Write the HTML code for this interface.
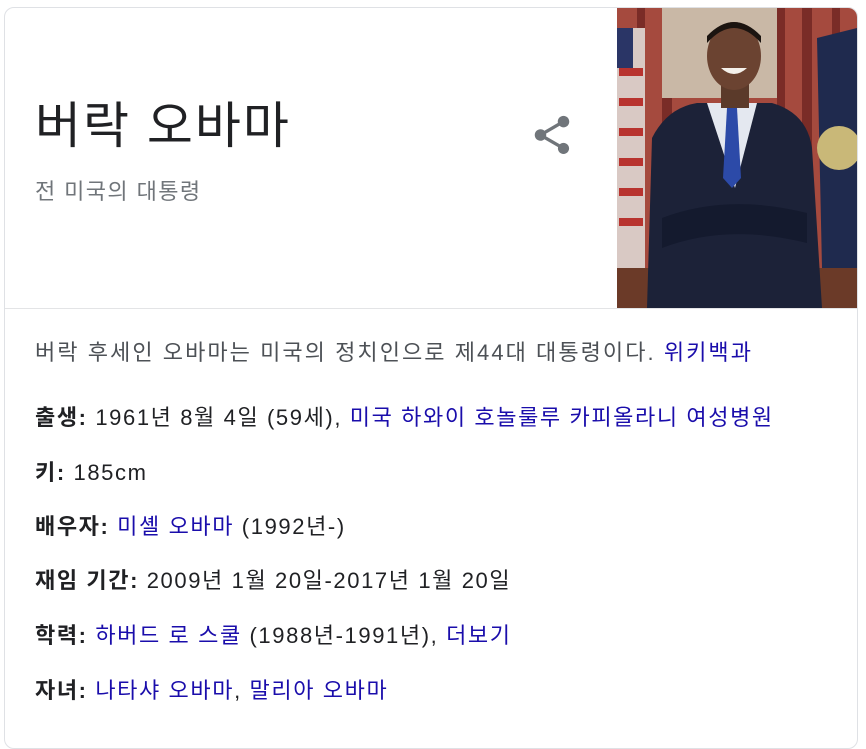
<!DOCTYPE html>
<html><head><meta charset="utf-8"><style>
html,body{margin:0;padding:0;background:#fff;width:866px;height:732px;overflow:hidden}
body{font-family:"Liberation Sans","Noto Sans CJK KR",sans-serif;color:#202124}
.card{position:absolute;left:4px;top:7px;width:852px;height:740px;border:1px solid #dfe1e5;border-radius:10px;overflow:hidden;background:#fff}
.photo{position:absolute;left:612px;top:0;width:240px;height:300px}
.div{position:absolute;left:0;top:300px;width:852px;height:1px;background:#e3e4e6}
h1{position:absolute;left:30px;top:88px;margin:0;font-size:50px;letter-spacing:2px;font-weight:400;line-height:60px;color:#202124}
.sub{position:absolute;left:30px;top:166px;font-size:22px;letter-spacing:1.4px;color:#70757a}
.share{position:absolute;left:524px;top:104px}
.l{position:absolute;left:30px;font-size:22px;letter-spacing:1.6px;line-height:30px;white-space:nowrap;color:#202124}
.l b{font-weight:700}
a{color:#1a0dab;text-decoration:none}
.desc{color:#4d5156;letter-spacing:2.05px}
</style></head><body>
<div class="card">
<h1>버락 오바마</h1>
<div class="sub">전 미국의 대통령</div>
<svg class="share" width="46" height="46" viewBox="0 0 24 24"><path fill="#70757a" d="M18 16.08c-.76 0-1.44.3-1.96.77L8.91 12.7c.05-.23.09-.46.09-.7s-.04-.47-.09-.7l7.05-4.11c.54.5 1.25.81 2.04.81 1.66 0 3-1.34 3-3s-1.34-3-3-3-3 1.34-3 3c0 .24.04.47.09.7L8.04 9.81C7.5 9.31 6.79 9 6 9c-1.66 0-3 1.34-3 3s1.34 3 3 3c.79 0 1.5-.31 2.04-.81l7.12 4.16c-.05.21-.08.43-.08.65 0 1.61 1.31 2.92 2.92 2.92s2.92-1.31 2.92-2.92-1.31-2.92-2.92-2.92z"/></svg>
<svg class="photo" viewBox="0 0 240 300" preserveAspectRatio="none">
<rect width="240" height="300" fill="#a54a3e"/>
<g fill="#7a2c27"><rect x="20" width="8" height="300"/><rect x="45" width="10" height="300"/><rect x="160" width="8" height="300"/><rect x="185" width="10" height="300"/><rect x="215" width="8" height="300"/></g>
<rect x="45" y="0" width="115" height="90" fill="#c9b8a6"/>
<rect x="0" y="20" width="28" height="240" fill="#d9c9c4"/>
<g fill="#b8332f"><rect x="2" y="60" width="24" height="8"/><rect x="2" y="90" width="24" height="8"/><rect x="2" y="120" width="24" height="8"/><rect x="2" y="150" width="24" height="8"/><rect x="2" y="180" width="24" height="8"/><rect x="2" y="210" width="24" height="8"/></g>
<rect x="0" y="20" width="16" height="40" fill="#2a3566"/>
<path d="M200 30 L240 20 L240 260 L205 260 Z" fill="#1f2a4e"/>
<circle cx="222" cy="140" r="22" fill="#c9b878"/>
<rect x="0" y="260" width="240" height="40" fill="#6b3a28"/>
<path d="M30 300 L35 130 Q50 100 80 95 L155 95 Q190 105 195 140 L205 300 Z" fill="#1c2238"/>
<path d="M90 95 L118 180 L140 95 Z" fill="#e4e8f0"/>
<path d="M110 100 L120 100 L124 170 L115 180 L106 170 Z" fill="#2c4aa8"/>
<rect x="104" y="70" width="28" height="30" fill="#5b3a2a"/>
<ellipse cx="117" cy="48" rx="27" ry="34" fill="#6b4331"/>
<path d="M90 35 Q117 5 144 35 L144 28 Q117 0 90 28 Z" fill="#1b1410"/>
<path d="M104 60 Q117 72 130 60 Z" fill="#f4f0ea"/>
<path d="M45 210 Q110 185 190 205 L190 235 Q110 215 45 240 Z" fill="#141a2e"/>
</svg>
<div class="div"></div>
<div class="l desc" style="top:330px">버락 후세인 오바마는 미국의 정치인으로 제44대 대통령이다. <a>위키백과</a></div>
<div class="l" style="top:395px"><b>출생:</b> 1961년 8월 4일 (59세), <a>미국 하와이 호놀룰루 카피올라니 여성병원</a></div>
<div class="l" style="top:450px"><b>키:</b> 185cm</div>
<div class="l" style="top:504px"><b>배우자:</b> <a>미셸 오바마</a> (1992년-)</div>
<div class="l" style="top:558px"><b>재임 기간:</b> 2009년 1월 20일-2017년 1월 20일</div>
<div class="l" style="top:613px"><b>학력:</b> <a>하버드 로 스쿨</a> (1988년-1991년), <a>더보기</a></div>
<div class="l" style="top:668px"><b>자녀:</b> <a>나타샤 오바마</a>, <a>말리아 오바마</a></div>
</div>
</body></html>
